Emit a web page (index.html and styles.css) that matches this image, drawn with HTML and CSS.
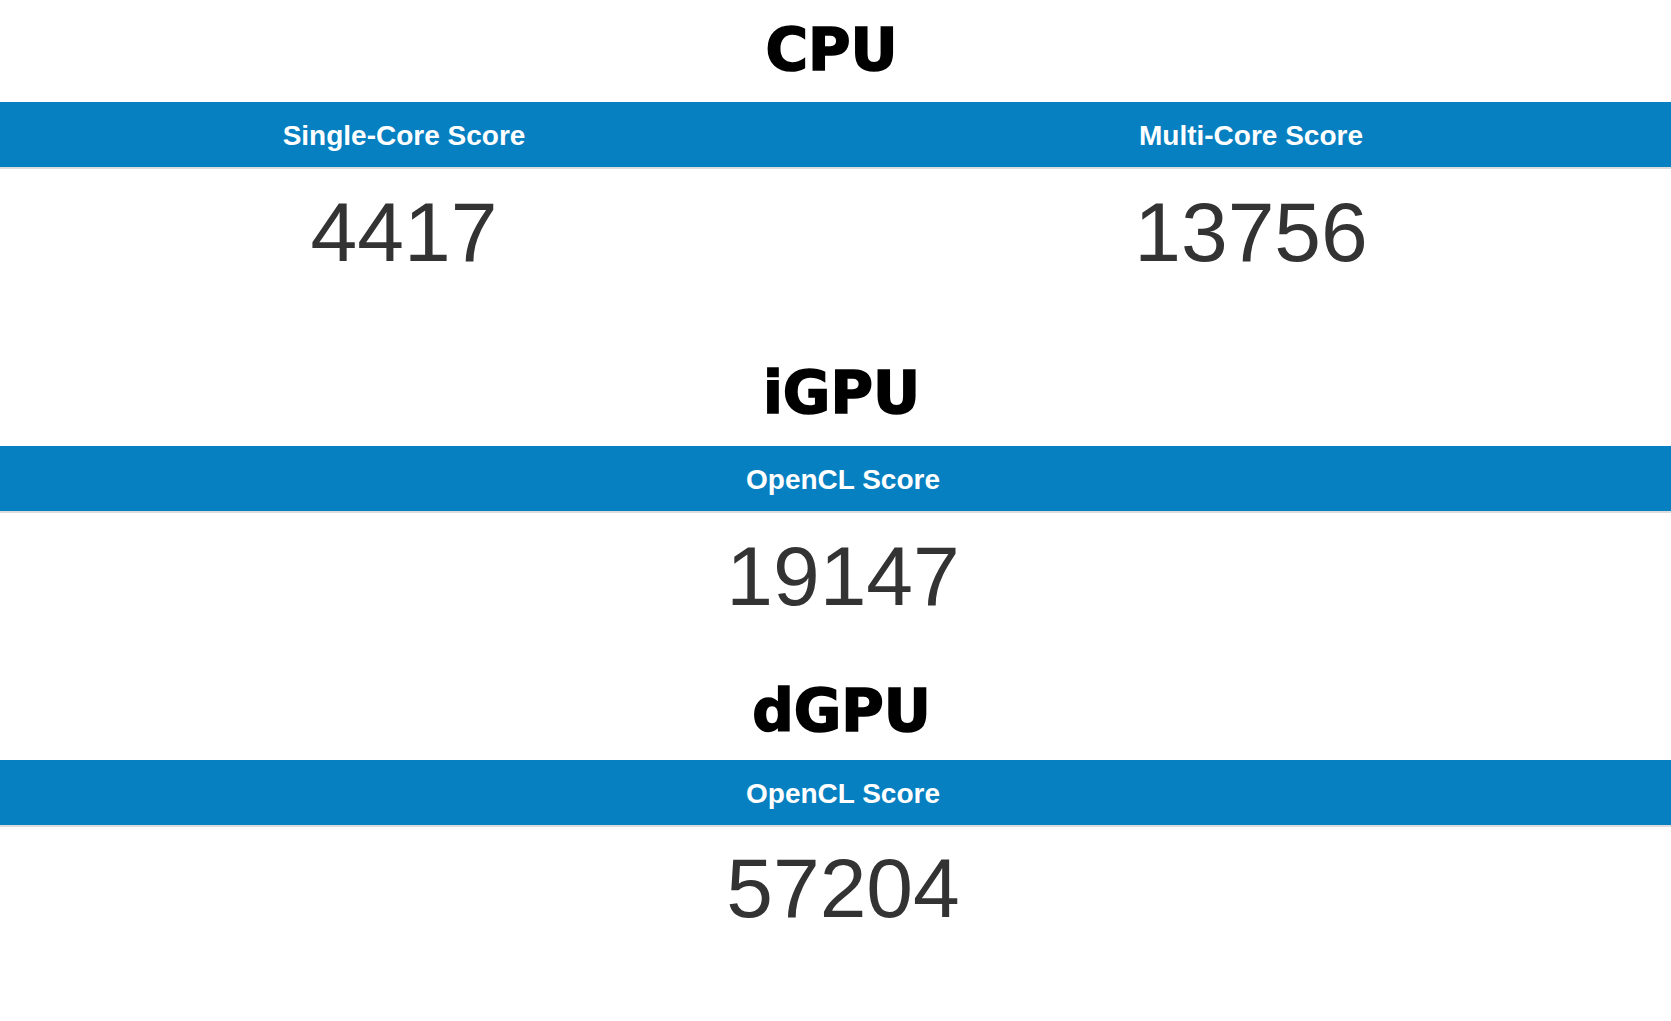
FILE: index.html
```html
<!DOCTYPE html>
<html lang="en">

<head>
    <meta charset="UTF-8">
    <meta name="viewport" content="width=device-width, initial-scale=1.0">
    <title>Benchmark Scores</title>
    <link rel="stylesheet" href="styles.css">
</head>

<body>
    <div class="section cpu">
        <h2 class="title">CPU</h2>
        <div class="bar two">
            <div class="cell">Single-Core Score</div>
            <div class="cell">Multi-Core Score</div>
        </div>
        <div class="values two">
            <div class="score">4417</div>
            <div class="score">13756</div>
        </div>
    </div>

    <div class="section gpu">
        <h2 class="title">iGPU</h2>
        <div class="bar">
            <div class="cell">OpenCL Score</div>
        </div>
        <div class="values">
            <div class="score">19147</div>
        </div>
    </div>

    <div class="section gpu dgpu">
        <h2 class="title">dGPU</h2>
        <div class="bar">
            <div class="cell">OpenCL Score</div>
        </div>
        <div class="values">
            <div class="score">57204</div>
        </div>
    </div>
</body>

</html>
```

FILE: styles.css
```css
* {
    margin: 0;
    padding: 0;
    box-sizing: border-box;
}

body {
    font-family: "Liberation Sans", Arial, Helvetica, sans-serif;
    background-color: white;
}

.title {
    font-family: "DejaVu Sans", "Liberation Sans", sans-serif;
    font-weight: bold;
    font-size: 58px;
    line-height: 58px;
    color: black;
    text-align: center;
    margin-bottom: 24px;
    -webkit-text-stroke: 1.6px black;
}

.cpu .title {
    margin-top: 21px;
    margin-bottom: 23px;
    padding-right: 8px;
}

.gpu .title {
    padding-left: 12px;
}

.dgpu .title {
    margin-bottom: 20px;
}

.bar {
    background-color: #0780c1;
    border-bottom: 2px solid #dcdcdc;
    color: white;
    font-weight: bold;
    font-size: 28px;
    height: 67px;
    line-height: 63px;
    padding-top: 2px;
    text-align: center;
}

.values {
    padding: 21px 0 64px;
    text-align: center;
}

.cpu .values {
    padding-bottom: 90px;
}

.dgpu .values {
    padding-top: 19px;
}

.gpu .cell,
.gpu .score {
    padding-left: 15px;
}

/* two columns for single / multi core */
.two {
    display: grid;
    grid-template-columns: 808px 1fr;
    column-gap: 23px;
}

.score {
    font-size: 84px;
    line-height: 84px;
    color: #333;
}
```
